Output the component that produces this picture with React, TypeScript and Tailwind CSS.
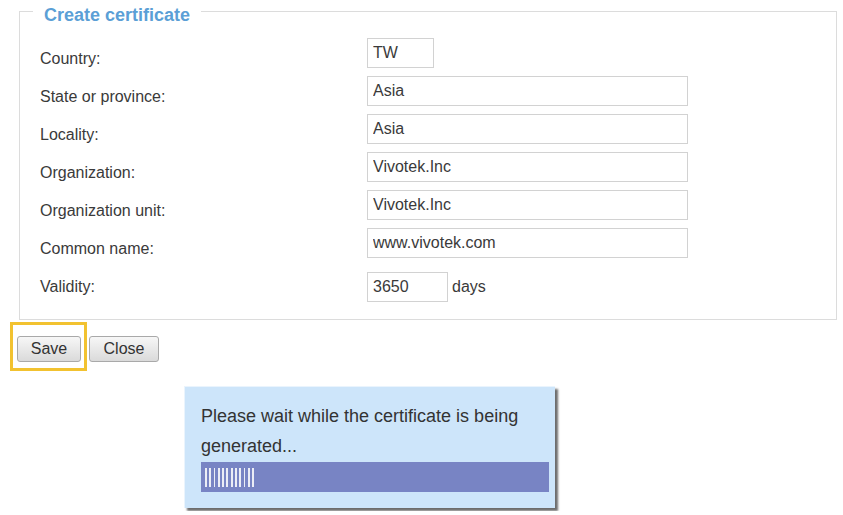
const font = { fontFamily: '"Liberation Sans", Arial, sans-serif' };

const rows = [
  { label: "Country:", value: "TW", width: "w-[67px]" },
  { label: "State or province:", value: "Asia", width: "w-[321px]" },
  { label: "Locality:", value: "Asia", width: "w-[321px]" },
  { label: "Organization:", value: "Vivotek.Inc", width: "w-[321px]" },
  { label: "Organization unit:", value: "Vivotek.Inc", width: "w-[321px]" },
  { label: "Common name:", value: "www.vivotek.com", width: "w-[321px]" },
];

const inputCls =
  "h-[30px] border border-[#d2d2d2] bg-white px-[5px] text-[16px] text-[#3a3a3a] outline-none";

function Button({ children, width }: { children: React.ReactNode; width: string }) {
  return (
    <button
      className={`${width} h-[26px] rounded-[3px] border border-[#a9a9a9] bg-gradient-to-b from-[#f7f7f7] to-[#dadada] text-[16px] text-[#333]`}
    >
      {children}
    </button>
  );
}

export default function App() {
  const ticks = Array.from({ length: 12 });

  return (
    <div className="min-h-[515px] w-[843px] bg-white" style={font}>
      <div className="pl-[19px] pr-[6px]">
        <fieldset className="-mt-[4px] border border-[#dcdcdc] px-0 pb-[17px]">
          <legend className="ml-[13px] px-[11px] pt-[8px] text-[18px] font-bold leading-[22px] text-[#5b9fd6]">
            Create certificate
          </legend>
          <div className="flex flex-col gap-[8px] pl-[20px] pt-[12px] text-[16px] text-[#3a3a3a]">
            {rows.map((r) => (
              <div key={r.label} className="flex items-start">
                <div className="w-[327px] pt-[12px] leading-[18px]">{r.label}</div>
                <input readOnly value={r.value} className={`${inputCls} ${r.width}`} />
              </div>
            ))}
            <div className="mt-[6px] flex items-center">
              <div className="w-[327px] leading-[18px]">Validity:</div>
              <input readOnly value="3650" className={`${inputCls} w-[81px]`} />
              <span className="ml-[4px]">days</span>
            </div>
          </div>
        </fieldset>
      </div>

      <div className="ml-[17px] mt-[16px] flex gap-[8px]">
        <div className="relative">
          <Button width="w-[64px]">Save</Button>
          <div className="pointer-events-none absolute -left-[7px] -top-[14px] h-[49px] w-[77px] border-[3px] border-[#f2c230]" />
        </div>
        <Button width="w-[70px]">Close</Button>
      </div>

      <div className="ml-[184px] mt-[24px] h-[122px] w-[371px] border-t border-l border-[#eaf4fd] bg-[#cde5fa] pl-[16px] pt-[14px] shadow-[3px_3px_2px_rgba(60,60,60,0.75)]">
        <p className="text-[18px] leading-[30px] text-[#333]">
          Please wait while the certificate is being
          <br />
          generated...
        </p>
        <div className="mt-[1px] flex h-[30px] w-[348px] items-center gap-[2.5px] bg-[#7884c4] pl-[4px]">
          {ticks.map((_, i) => (
            <span key={i} className="h-[19px] w-[1.8px] bg-white/85" />
          ))}
        </div>
      </div>
    </div>
  );
}
